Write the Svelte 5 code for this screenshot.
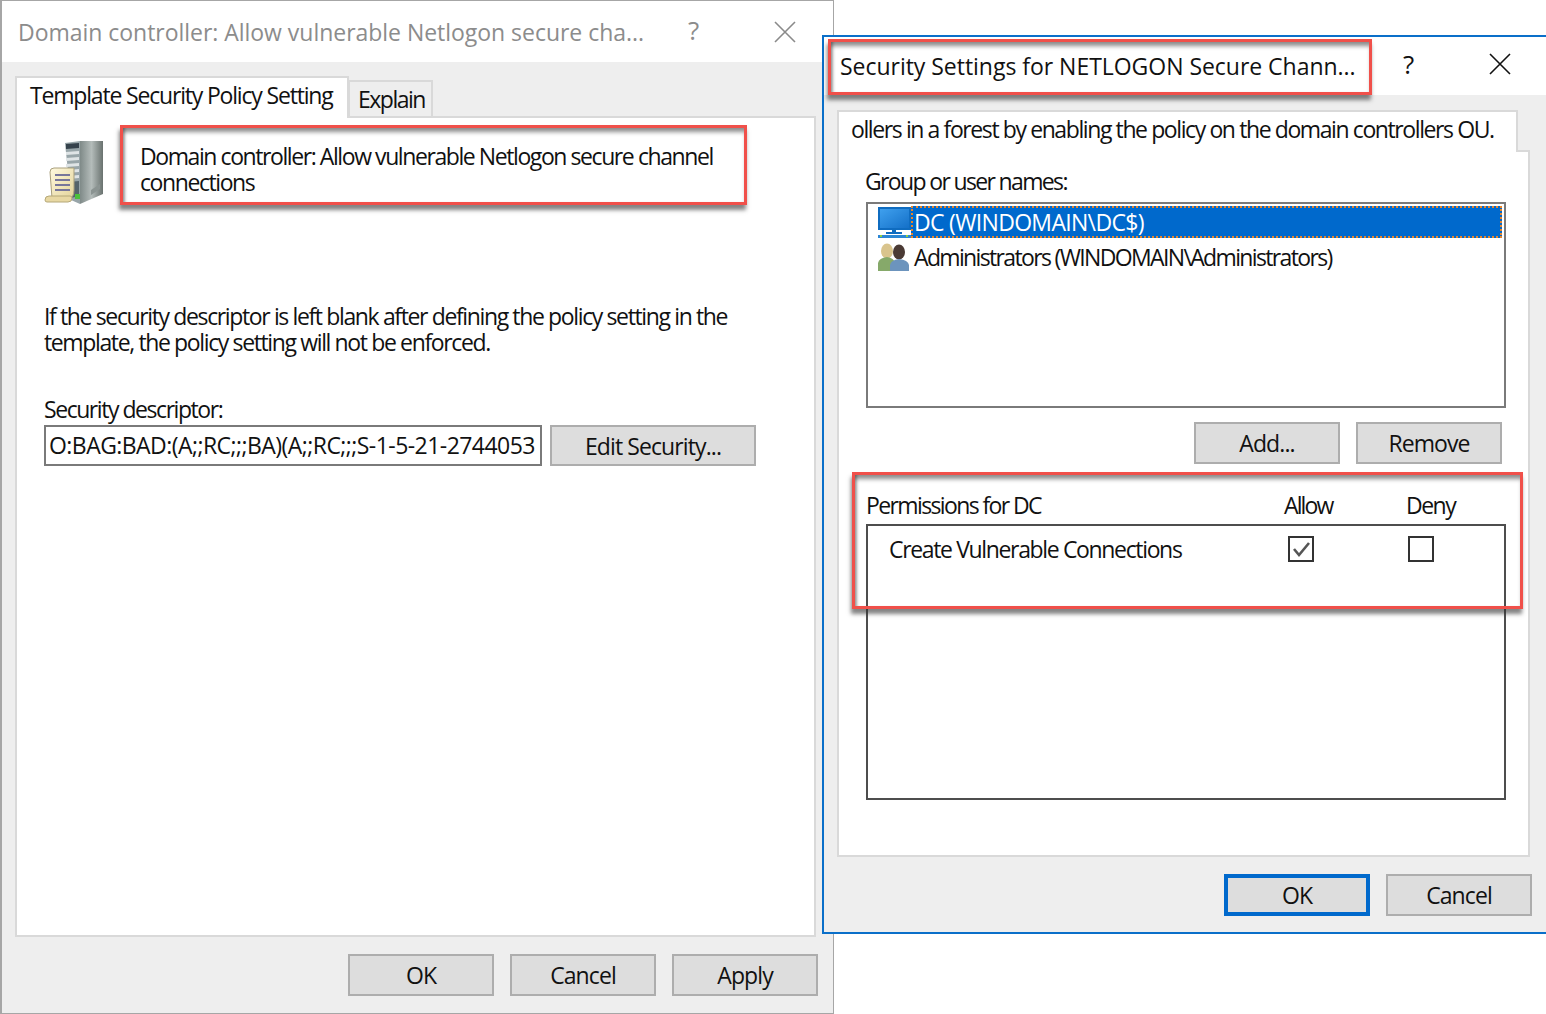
<script>
    const leftButtons = ['OK', 'Cancel', 'Apply'];
</script>

<div class="desktop">
    <div class="window leftWindow">
        <div class="titlebar leftTitlebar">
            <span class="leftTitle">Domain controller: Allow vulnerable Netlogon secure cha...</span>
            <span class="help mutedCaption">?</span>
            <svg class="close" viewBox="0 0 22 22" width="22" height="22"><path d="M1 1L21 21M21 1L1 21" stroke="#8a8a8a" stroke-width="1.6" fill="none"/></svg>
        </div>
        <div class="body leftBody">
            <div class="tabs">
                <div class="tab activeTab">Template Security Policy Setting</div>
                <div class="tab idleTab">Explain</div>
            </div>
            <div class="panel leftPanel">
                <div class="policyHead">
                    <svg class="serverIcon" viewBox="0 0 62 66" width="62" height="66">
                        <defs>
                            <linearGradient id="side" x1="0" x2="1" y1="0" y2="0"><stop offset="0" stop-color="#7f8a88"/><stop offset="0.5" stop-color="#b4bcba"/><stop offset="1" stop-color="#69726f"/></linearGradient>
                            <linearGradient id="paper" x1="0" x2="1" y1="0" y2="1"><stop offset="0" stop-color="#fff9df"/><stop offset="1" stop-color="#e4d49a"/></linearGradient>
                        </defs>
                        <path d="M36 1H59V54L36 64Z" fill="url(#side)"/>
                        <path d="M21 3L36 1V64L27 60Z" fill="#98a5a9"/>
                        <path d="M22 4L35 3V8L22 9Z" fill="#36424c"/>
                        <path d="M22 12L35 11V14L22 15ZM22 18L35 17V20L22 21ZM22 24L35 23V26L22 27ZM23 30L35 29V32L23 33ZM24 36L35 35V38L24 39Z" fill="#dfe4e6"/>
                        <path d="M24 42L35 41V56L27 58Z" fill="#56646b"/>
                        <rect x="31" y="54" width="5" height="5" fill="#4cc13c"/>
                        <path d="M47 50L56 44V49L47 55Z" fill="#8b9492"/>
                        <path d="M6 32Q6 28 10 28H30V50Q30 58 25 58H8Z" fill="url(#paper)" stroke="#a99f7c" stroke-width="1"/>
                        <path d="M11 35H26M11 40H26M11 45H26M11 50H26" stroke="#77769a" stroke-width="2"/>
                        <path d="M1 60Q1 56 5 56H26Q28 56 28 58Q28 62 24 62H3Q1 62 1 60Z" fill="#e8d8a3" stroke="#b5a878" stroke-width="1"/>
                    </svg>
                    <p class="policyName">Domain controller: Allow vulnerable Netlogon secure channel<br>connections</p>
                </div>
                <p class="blankNote">If the security descriptor is left blank after defining the policy setting in the<br>template, the policy setting will not be enforced.</p>
                <div class="descriptorLabel">Security descriptor:</div>
                <div class="descriptorRow">
                    <div class="descriptorInput">O:BAG:BAD:(A;;RC;;;BA)(A;;RC;;;S-1-5-21-2744053</div>
                    <div class="button editButton">Edit Security...</div>
                </div>
            </div>
            <div class="footer leftFooter">
                {#each leftButtons as label}
                    <div class="button">{label}</div>
                {/each}
            </div>
        </div>
    </div>

    <div class="window rightWindow">
        <div class="titlebar rightTitlebar">
            <span class="rightTitle">Security Settings for NETLOGON Secure Chann...</span>
            <span class="help">?</span>
            <svg class="close" viewBox="0 0 22 22" width="22" height="22"><path d="M1 1L21 21M21 1L1 21" stroke="#111" stroke-width="1.6" fill="none"/></svg>
        </div>
        <div class="body rightBody">
            <div class="tabs">
                <div class="tab activeTab wideTab">ollers in a forest by enabling the policy on the domain controllers OU.</div>
            </div>
            <div class="panel rightPanel">
                <div class="groupLabel">Group or user names:</div>
                <div class="userList">
                    <div class="userRow">
                        <svg viewBox="0 0 34 32" width="34" height="32">
                            <defs><linearGradient id="screen" x1="0" x2="1" y1="0" y2="1"><stop offset="0" stop-color="#3fa0ee"/><stop offset="1" stop-color="#1470c8"/></linearGradient></defs>
                            <rect x="1" y="1" width="33" height="23" fill="#0f6cc0"/>
                            <rect x="3" y="3" width="29" height="19" fill="url(#screen)"/>
                            <rect x="15" y="24" width="4" height="3" fill="#0f6cc0"/>
                            <rect x="9" y="26" width="16" height="2" fill="#0f6cc0"/>
                            <rect x="1" y="29" width="33" height="3" fill="#2b86d4"/>
                            <rect x="3" y="29" width="2" height="2" fill="#8fd13f"/>
                            <rect x="29" y="29" width="2" height="2" fill="#8fd13f"/>
                        </svg>
                        <span class="selected">DC (WINDOMAIN\DC$)</span>
                    </div>
                    <div class="userRow secondRow">
                        <svg viewBox="0 0 34 30" width="34" height="30">
                            <ellipse cx="10" cy="9" rx="6" ry="7.5" fill="#d9c48d"/>
                            <path d="M1 29V21Q2 16 10 15Q17 16 18 21V29Z" fill="#86a96a"/>
                            <ellipse cx="22" cy="10" rx="6" ry="7.5" fill="#4a3a34"/>
                            <path d="M13 29V23Q14 18 22 17Q31 18 32 23V29Z" fill="#6c94bd"/>
                        </svg>
                        <span class="adminName">Administrators (WINDOMAIN\Administrators)</span>
                    </div>
                </div>
                <div class="listButtons">
                    <div class="button">Add...</div>
                    <div class="button">Remove</div>
                </div>
                <div class="permHead">
                    <span class="permTitle">Permissions for DC</span>
                    <span class="allowHead">Allow</span>
                    <span class="denyHead">Deny</span>
                </div>
                <div class="permList">
                    <div class="permRow">
                        <span class="permName">Create Vulnerable Connections</span>
                        <span class="checkbox allowBox">
                            <svg viewBox="0 0 24 24" width="24" height="24"><path d="M5 12L10 18L20 6" stroke="#555" stroke-width="2.6" fill="none"/></svg>
                        </span>
                        <span class="checkbox denyBox"></span>
                    </div>
                </div>
            </div>
            <div class="footer rightFooter">
                <div class="button defaultButton">OK</div>
                <div class="button">Cancel</div>
            </div>
        </div>
    </div>

    <div class="callout calloutPolicy"></div>
    <div class="callout calloutTitle"></div>
    <div class="callout calloutPerms"></div>
</div>

<style>
    :global(body) {
        margin: 0;
        background-color: #ffffff;
    }
    .desktop {
        position: relative;
        width: 1546px;
        height: 1014px;
        overflow: hidden;
        font-family: "Open Sans", "Liberation Sans", sans-serif;
        font-size: 23px;
        letter-spacing: -0.9px;
        color: #111111;
    }
    p {
        margin: 0;
    }
    .window {
        position: absolute;
        box-sizing: border-box;
        display: flex;
        flex-direction: column;
        background-color: #ffffff;
    }
    .leftWindow {
        left: 0;
        top: 0;
        width: 834px;
        height: 1014px;
        border: solid 1px #a6a6a6;
        border-left-width: 2px;
    }
    .rightWindow {
        left: 822px;
        top: 35px;
        width: 724px;
        height: 899px;
        border: solid 2px #0a6fc9;
        border-right: none;
    }
    .titlebar {
        display: flex;
        align-items: center;
        flex-shrink: 0;
    }
    .leftTitlebar {
        height: 61px;
        padding-left: 16px;
    }
    .rightTitlebar {
        height: 58px;
        padding-left: 16px;
    }
    .leftTitle {
        width: 670px;
        margin-top: 1px;
        color: #8c8c8c;
        letter-spacing: -0.03px;
        white-space: nowrap;
    }
    .rightTitle {
        width: 563px;
        color: #111111;
        letter-spacing: -0.03px;
        white-space: nowrap;
    }
    .help {
        font-size: 26px;
        letter-spacing: 0;
        margin-top: -4px;
    }
    .mutedCaption {
        color: #8c8c8c;
        width: 86px;
    }
    .rightTitlebar .help {
        width: 86px;
    }
    .rightTitlebar .close {
        margin-top: -4px;
    }
    .close {
        flex-shrink: 0;
    }
    .body {
        flex: 1;
        display: flex;
        flex-direction: column;
        background-color: #eeeeee;
        min-height: 0;
    }
    .leftBody {
        padding: 14px 13px 0 13px;
    }
    .rightBody {
        padding: 15px 0 0 13px;
    }
    .tabs {
        display: flex;
        align-items: flex-end;
        position: relative;
        z-index: 1;
        margin-bottom: -2px;
    }
    .tab {
        box-sizing: border-box;
        border: solid 2px #d9d9d9;
    }
    .activeTab {
        height: 42px;
        width: 334px;
        padding: 1px 0 0 13px;
        background-color: #ffffff;
        border-bottom: none;
        letter-spacing: -1.18px;
        white-space: nowrap;
    }
    .idleTab {
        height: 36px;
        width: 85px;
        margin-left: -1px;
        margin-bottom: 2px;
        padding: 1px 0 0 8px;
        border-bottom: none;
        letter-spacing: -1.5px;
    }
    .wideTab {
        width: 681px;
        padding-left: 12px;
        letter-spacing: -1.4px;
    }
    .panel {
        box-sizing: border-box;
        background-color: #ffffff;
        border: solid 2px #d9d9d9;
    }
    .leftPanel {
        width: 801px;
        height: 821px;
        padding: 22px 0 0 27px;
    }
    .policyHead {
        display: flex;
        height: 146px;
    }
    .serverIcon {
        flex-shrink: 0;
        margin-right: 34px;
    }
    .policyName {
        line-height: 26px;
        padding-top: 3px;
        white-space: nowrap;
        letter-spacing: -1.42px;
    }
    .blankNote {
        line-height: 26px;
        margin-top: 17px;
        white-space: nowrap;
        letter-spacing: -1.37px;
    }
    .descriptorLabel {
        margin-top: 39px;
        line-height: 30px;
        letter-spacing: -1.45px;
    }
    .descriptorRow {
        display: flex;
        margin-top: 1px;
        gap: 8px;
    }
    .descriptorInput {
        box-sizing: border-box;
        width: 498px;
        height: 41px;
        border: solid 2px #7a7a7a;
        padding-left: 3px;
        line-height: 37px;
        white-space: nowrap;
        overflow: hidden;
        letter-spacing: -0.55px;
    }
    .button {
        box-sizing: border-box;
        width: 146px;
        height: 42px;
        display: flex;
        align-items: center;
        justify-content: center;
        background-color: #dddddd;
        border: solid 2px #adadad;
        flex-shrink: 0;
    }
    .editButton {
        width: 206px;
        height: 41px;
    }
    .footer {
        display: flex;
        gap: 16px;
        justify-content: flex-end;
    }
    .leftFooter {
        margin-top: 17px;
        width: 803px;
    }
    .rightPanel {
        width: 693px;
        height: 707px;
        padding: 12px 0 0 27px;
    }
    .groupLabel {
        line-height: 38px;
        margin-left: -1px;
        margin-top: -2px;
        margin-bottom: 2px;
        letter-spacing: -1.65px;
    }
    .userList {
        box-sizing: border-box;
        width: 640px;
        height: 206px;
        border: solid 2px #7a7a7a;
        padding: 2px 2px 0 9px;
    }
    .userRow {
        display: flex;
        align-items: center;
        height: 32px;
    }
    .secondRow {
        margin-top: 3px;
        gap: 3px;
    }
    .adminName {
        letter-spacing: -1.65px;
    }
    .selected {
        flex: 1;
        box-sizing: border-box;
        height: 32px;
        line-height: 32px;
        background-color: #0069cc;
        color: #ffffff;
        outline: dotted 2px #e8852a;
        outline-offset: -2px;
        padding-left: 3px;
        letter-spacing: -0.68px;
    }
    .listButtons {
        display: flex;
        gap: 16px;
        width: 636px;
        justify-content: flex-end;
        margin-top: 14px;
    }
    .permHead {
        display: flex;
        margin-top: 23px;
        line-height: 37px;
        letter-spacing: -1.62px;
    }
    .permTitle {
        width: 418px;
    }
    .allowHead {
        width: 122px;
        letter-spacing: -1.9px;
    }
    .denyHead {
        letter-spacing: -1.5px;
    }
    .permList {
        box-sizing: border-box;
        width: 640px;
        height: 276px;
        border: solid 2px #4d4d4d;
    }
    .permRow {
        display: flex;
        align-items: center;
        padding: 7px 0 0 21px;
    }
    .permName {
        width: 399px;
        letter-spacing: -1.35px;
    }
    .checkbox {
        box-sizing: border-box;
        width: 26px;
        height: 26px;
        border: solid 2px #333333;
        display: block;
        flex-shrink: 0;
    }
    .checkbox svg {
        display: block;
        margin: -1px;
    }
    .allowBox {
        margin-right: 94px;
    }
    .rightFooter {
        margin-top: 17px;
        width: 695px;
    }
    .defaultButton {
        border: solid 4px #0069cc;
    }
    .callout {
        position: absolute;
        box-sizing: border-box;
        border: solid 3px #f0504a;
        box-shadow: -1px 5px 4px rgba(50, 50, 50, 0.6), inset 0 6px 4px -2px rgba(50, 50, 50, 0.55), inset 4px 0 3px -2px rgba(50, 50, 50, 0.45);
        pointer-events: none;
    }
    .calloutPolicy {
        left: 120px;
        top: 125px;
        width: 627px;
        height: 80px;
    }
    .calloutTitle {
        left: 828px;
        top: 39px;
        width: 544px;
        height: 56px;
    }
    .calloutPerms {
        left: 852px;
        top: 472px;
        width: 671px;
        height: 137px;
    }
</style>
